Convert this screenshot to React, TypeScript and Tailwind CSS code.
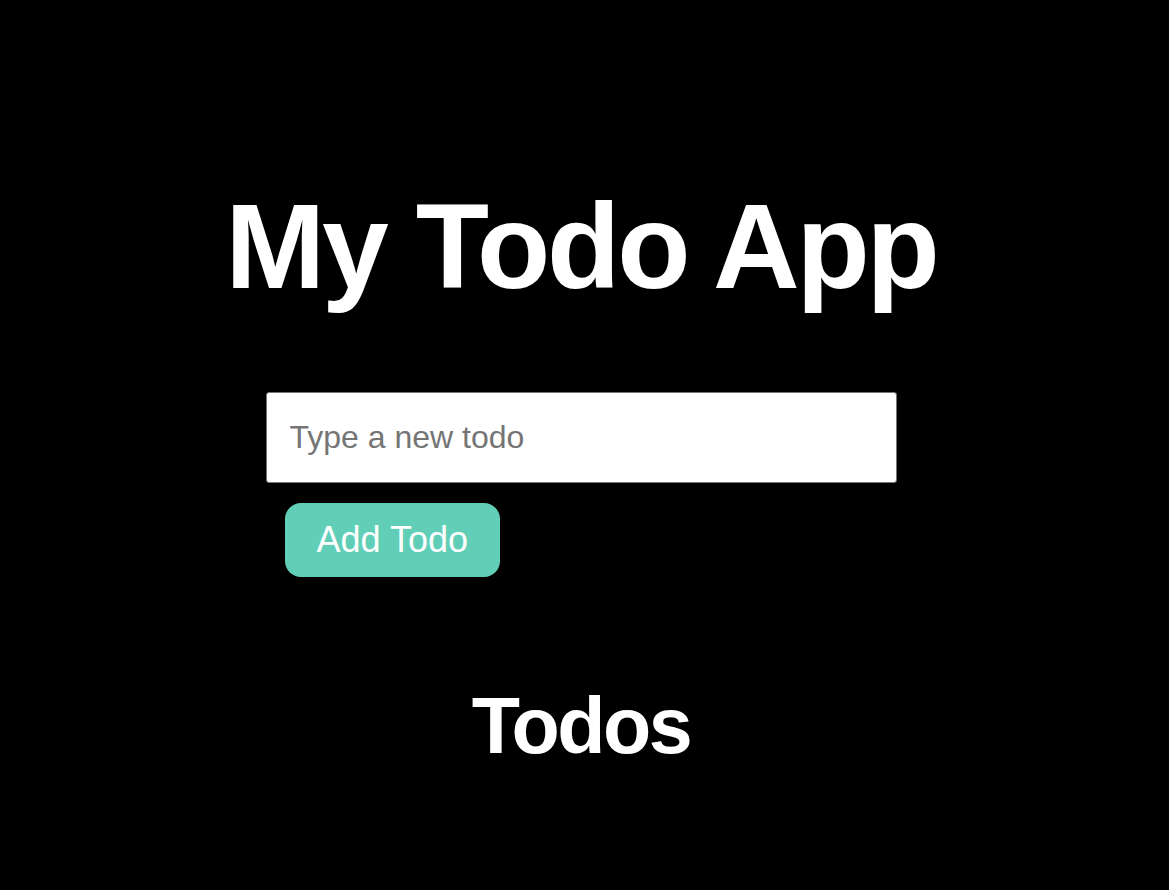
import { useState } from 'react';

export default function App() {
  const [text, setText] = useState('');
  const [todos, setTodos] = useState<string[]>([]);

  const addTodo = () => {
    if (!text.trim()) return;
    setTodos([...todos, text.trim()]);
    setText('');
  };

  return (
    <div className="min-h-[890px] bg-black text-white font-['Liberation_Sans',Arial,sans-serif]">
      <main className="flex flex-col items-center pt-[186px] pr-[7px]">
        {/* Title */}
        <h1 className="text-[120px] leading-none font-bold tracking-[-3.2px]">My Todo App</h1>

        {/* Form */}
        <div className="mt-[86px] w-[631px] flex flex-col items-start">
          <input
            value={text}
            onChange={(e) => setText(e.target.value)}
            placeholder="Type a new todo"
            className="w-full h-[91px] bg-white text-black text-[32px] pl-[23px] pr-6 border border-[#767676] rounded-[3px] placeholder:text-[#757575] outline-none"
          />
          <button
            onClick={addTodo}
            className="mt-[20px] ml-[19px] h-[74px] px-8 rounded-2xl bg-[#61cfb8] text-white text-[36px]"
          >
            Add Todo
          </button>
        </div>

        {/* List */}
        <h2 className="mt-[109px] text-[79px] leading-none font-bold tracking-[-2.5px]">Todos</h2>
        <ul>
          {todos.map((t, i) => (
            <li key={i} className="text-2xl">{t}</li>
          ))}
        </ul>
      </main>
    </div>
  );
}
